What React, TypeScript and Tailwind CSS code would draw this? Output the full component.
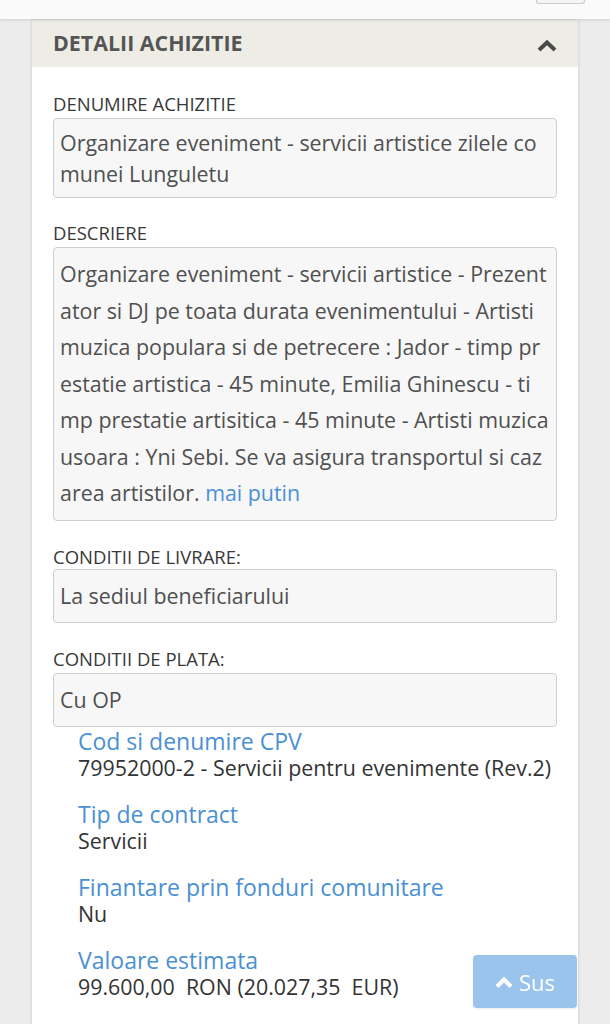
const FONT = { fontFamily: '"Open Sans", "Noto Sans", sans-serif' };

function Label({ children, tight }: { children: React.ReactNode; tight?: boolean }) {
  return (
    <div
      className={`text-[18.5px] font-medium text-[#383838] uppercase leading-[24px] ${tight ? "mb-0" : "mb-[2px]"}`}
    >
      {children}
    </div>
  );
}

function Box({ lines, lh, tail }: { lines: string[]; lh: string; tail?: React.ReactNode }) {
  return (
    <div
      className={`bg-[#f7f7f7] border border-[#cfcfcf] rounded-[4px] px-[6px] py-[8px] text-[21.4px] text-[#505050] whitespace-nowrap overflow-hidden ${lh}`}
    >
      {lines.map((l, i) => (
        <div key={i}>
          {l}
          {i === lines.length - 1 && tail}
        </div>
      ))}
    </div>
  );
}

function Info({ label, value }: { label: string; value: string }) {
  return (
    <div className="mb-[19px]">
      <div className="text-[23px] text-[#4a90d4] leading-[28px]">{label}</div>
      <div className="text-[21.4px] text-[#333] leading-[26px] whitespace-pre">{value}</div>
    </div>
  );
}

const DESC = [
  "Organizare eveniment - servicii artistice - Prezent",
  "ator si DJ pe toata durata evenimentului - Artisti",
  "muzica populara si de petrecere : Jador - timp pr",
  "estatie artistica - 45 minute, Emilia Ghinescu - ti",
  "mp prestatie artisitica - 45 minute - Artisti muzica",
  "usoara : Yni Sebi. Se va asigura transportul si caz",
  "area artistilor. ",
];

export default function App() {
  return (
    <div style={FONT} className="min-h-[1024px] bg-[#ececec] overflow-hidden">
      {/* top bar */}
      <div className="h-[19px] bg-[#fafafa] shadow-[0_1px_3px_rgba(0,0,0,0.12)] flex justify-end relative z-10">
        <div className="w-[49px] h-[4px] border border-t-0 border-[#cccccc] rounded-b-[3px] bg-[#f4f4f4] mr-[25px]" />
      </div>

      <div className="mx-[32px] mt-[1px] bg-white shadow-[0_0_3px_rgba(0,0,0,0.18)]">
        {/* header */}
        <div className="h-[47px] bg-[#eeede5] flex items-center justify-between pl-[21px] pr-[20px]">
          <span className="text-[21.4px] font-bold text-[#555]">DETALII ACHIZITIE</span>
          <svg width="22" height="14" viewBox="0 0 22 14" className="mt-[4px]">
            <path d="M3 11 L11 3.5 L19 11" fill="none" stroke="#4a4a4a" strokeWidth="4" />
          </svg>
        </div>

        <div className="px-[21px] pt-[25px]">
          <Label>Denumire achizitie</Label>
          <div className="mb-[23px]">
            <Box
              lh="leading-[31px] py-[7.5px]"
              lines={["Organizare eveniment - servicii artistice zilele co", "munei Lunguletu"]}
            />
          </div>

          <Label>Descriere</Label>
          <div className="mb-[24px]">
            <Box lh="leading-[36.5px]" lines={DESC} tail={<span className="text-[#4a90d4]">mai putin</span>} />
          </div>

          <Label tight>Conditii de livrare:</Label>
          <div className="mb-[24px]">
            <Box lh="leading-[36px]" lines={["La sediul beneficiarului"]} />
          </div>

          <Label>Conditii de plata:</Label>
          <Box lh="leading-[36px]" lines={["Cu OP"]} />

          <div className="pl-[25px]">
            <Info label="Cod si denumire CPV" value="79952000-2 - Servicii pentru evenimente (Rev.2)" />
            <Info label="Tip de contract" value="Servicii" />
            <Info label="Finantare prin fonduri comunitare" value="Nu" />
            <Info label="Valoare estimata" value="99.600,00  RON (20.027,35  EUR)" />
            <Info label="Data limita de depunere a ofertelor" value="" />
          </div>
        </div>
      </div>

      {/* back to top */}
      <div className="fixed bottom-[16px] right-[33px] w-[104px] h-[53px] rounded-[4px] bg-[#9ac4ec] flex items-center justify-center gap-[6px] text-white text-[22px] shadow-[0_1px_2px_rgba(0,0,0,0.08)]">
        <svg width="18" height="12" viewBox="0 0 18 12">
          <path d="M2 10.5 L9 3.5 L16 10.5" fill="none" stroke="#ffffff" strokeWidth="4" />
        </svg>
        <span className="leading-none">Sus</span>
      </div>
    </div>
  );
}
